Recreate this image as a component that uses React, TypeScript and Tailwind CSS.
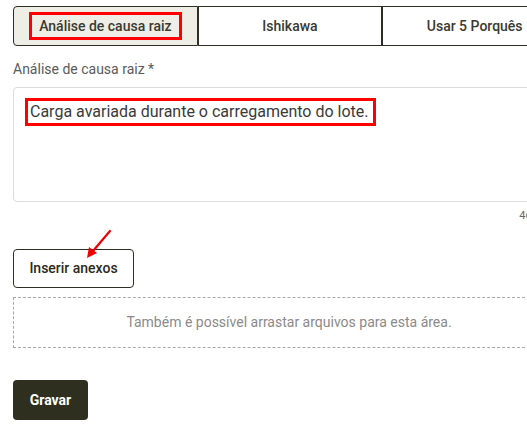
import React from "react";

export default function App() {
  return (
    <div
      className="relative w-[527px] h-[426px] overflow-hidden bg-white"
      style={{ fontFamily: "Roboto, 'Liberation Sans', sans-serif" }}
    >
      <div className="pl-[13px] pt-[6px] w-[567px]">
        {/* Tabs */}
        <div className="flex h-[40px]">
          <div className="w-[185px] h-full flex items-center justify-center border border-[#2f2e22] rounded-l-[4px] bg-[#eeeee6]">
            <span className="border-[3px] border-[#ff0000] h-[28px] px-[7px] flex items-center text-[14px] font-medium text-[#3a3a30] leading-none">
              Análise de causa raiz
            </span>
          </div>
          <div className="w-[185px] h-full flex items-center justify-center border border-[#2f2e22] text-[14px] font-medium text-[#3a3a30]">
            Ishikawa
          </div>
          <div className="w-[185px] h-full flex items-center justify-center border border-[#2f2e22] text-[14px] font-medium text-[#3a3a30]">
            Usar 5 Porquês
          </div>
        </div>

        {/* Label */}
        <div className="mt-[13px] text-[14px] leading-[20px] text-[#5a5a5a]">
          Análise de causa raiz *
        </div>

        {/* Textarea */}
        <div className="mt-[8px] h-[115px] border border-[#dcdcdc] rounded-[4px] pl-[11px] pt-[10px]">
          <span className="inline-block border-[3px] border-[#ff0000] pl-[2px] pr-[4px] text-[16px] leading-[22px] text-[#3a3a3a]">
            Carga avariada durante o carregamento do lote.
          </span>
        </div>

        {/* Counter */}
        <div className="mt-[6px] h-[16px] text-right pr-[6px] text-[11px] leading-[16px] text-[#666]">
          46/4000
        </div>

        {/* Insert button */}
        <div className="mt-[25px] w-[121px] h-[39px] border border-[#2f2e22] rounded-[4px] flex items-center justify-center text-[14px] font-medium text-[#2a2a22]">
          Inserir anexos
        </div>

        {/* Dropzone */}
        <div className="mt-[9px] w-[552px] h-[51px] border border-dashed border-[#a8a8a8] flex items-center justify-center text-[14px] text-[#8a8a8a]">
          Também é possível arrastar arquivos para esta área.
        </div>

        {/* Gravar */}
        <div className="mt-[32px] w-[75px] h-[40px] rounded-[4px] bg-[#2f2f20] flex items-center justify-center text-[14px] font-bold text-white">
          Gravar
        </div>
      </div>

      {/* Red arrow annotation */}
      <svg
        className="absolute left-0 top-0 pointer-events-none"
        width="527"
        height="426"
        viewBox="0 0 527 426"
      >
        <line x1="110" y1="231" x2="93" y2="251" stroke="#ee0000" strokeWidth="2.2" strokeLinecap="round" />
        <polygon points="87,258 89,247 97,253" fill="#ee0000" />
      </svg>
    </div>
  );
}
